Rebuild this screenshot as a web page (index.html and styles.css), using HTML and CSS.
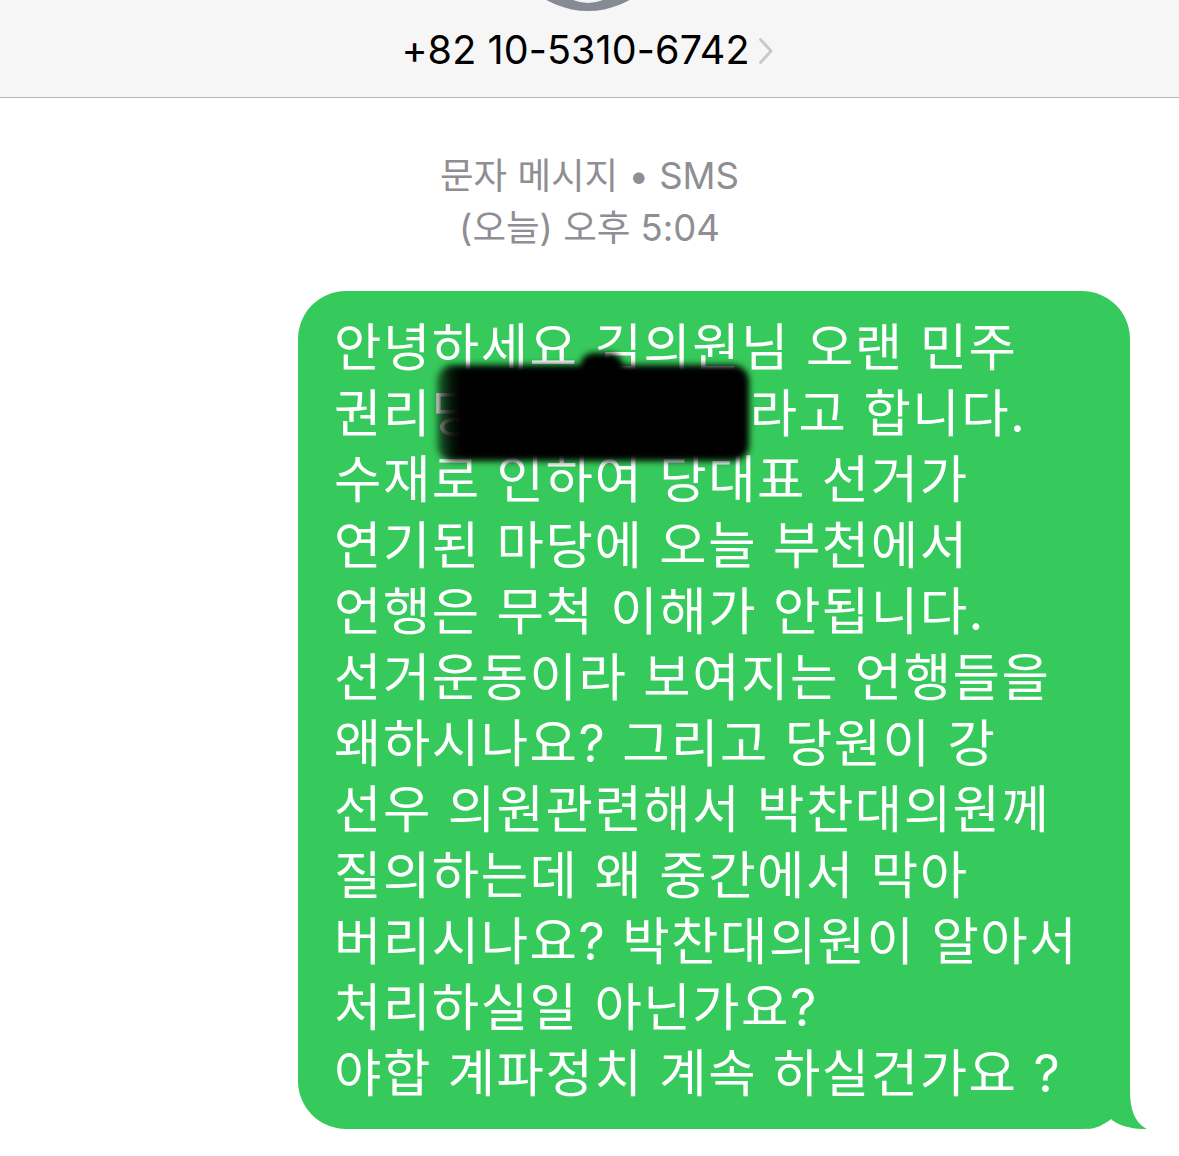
FILE: index.html
```html
<!DOCTYPE html>
<html lang="ko">
<head>
  <meta charset="utf-8">
  <meta name="viewport" content="width=device-width, initial-scale=1">
  <link rel="stylesheet" href="styles.css">
  <title>+82 10-5310-6742</title>
</head>
<body>
  <!-- Contact header -->
  <div class="header">
    <svg class="avatar" width="100" height="14" viewBox="0 0 100 14">
      <circle cx="50" cy="-73" r="84" fill="#868a94" />
      <circle cx="50" cy="-36" r="39" fill="#f4f4f6" />
    </svg>
    <div class="contact">
      <span class="number">+82 10-5310-6742</span>
      <svg class="chevron" width="16" height="28" viewBox="0 0 16 28">
        <path d="M2.5 2.5 L13 14 L2.5 25.5" fill="none" stroke="#c7c7cc" stroke-width="2.8" stroke-linecap="round" stroke-linejoin="round" />
      </svg>
    </div>
  </div>

  <!-- Thread -->
  <div class="thread">
    <div class="stamp">
      <div>문자 메시지 • SMS</div>
      <div>(오늘) 오후 5:04</div>
    </div>

    <div class="row">
      <div class="bubble">
        <div class="text">
          안녕하세요 김의원님 오랜 민주<br>
          권리당<span class="gap"></span>라고 합니다.<br>
          수재로 인하여 당대표 선거가<br>
          연기된 마당에 오늘 부천에서<br>
          언행은 무척 이해가 안됩니다.<br>
          선거운동이라 보여지는 언행들을<br>
          왜하시나요? 그리고 당원이 강<br>
          선우 의원관련해서 박찬대의원께<br>
          질의하는데 왜 중간에서 막아<br>
          버리시나요? 박찬대의원이 알아서<br>
          처리하실일 아닌가요?<br>
          야합 계파정치 계속 하실건가요 ?
        </div>
        <div class="blot"></div>
        <div class="blot-tip"></div>
        <svg class="tail" width="60" height="60" viewBox="0 0 60 60">
          <path d="M0 0 L43 0 L43 22 C43 44 50 55 60 60 C50 60.5 31 58 23 49 C17 56 9 60 0 60 Z" fill="#36c95b" />
        </svg>
      </div>
    </div>
  </div>
</body>
</html>
```

FILE: styles.css
```css
body {
  margin: 0;
  background: #ffffff;
  font-family: Inter, "Noto Sans CJK KR", sans-serif;
}

.header {
  position: relative;
  height: 98px;
  background: #f6f6f6;
  border-bottom: 1px solid #b6b6b8;
  display: flex;
  justify-content: center;
  box-sizing: border-box;
  padding-top: 26px;
}

.avatar {
  position: absolute;
  top: 0;
  left: 538px;
}

.contact {
  display: flex;
  align-items: center;
  gap: 8px;
  height: 48px;
  margin-left: -4px;
}

.number {
  font-size: 39.5px;
  color: #000;
  letter-spacing: 0.1px;
}

.chevron {
  margin-top: 1px;
}

.thread {
  padding-top: 52px;
}

.stamp {
  text-align: center;
  color: #8e8e93;
  font-size: 36.5px;
  line-height: 52px;
}

.row {
  display: flex;
  justify-content: flex-end;
  padding-right: 49px;
  margin-top: 37px;
}

.bubble {
  position: relative;
  width: 832px;
  box-sizing: border-box;
  background: #36c95b;
  border-radius: 48px;
  padding: 23px 20px 23px 36px;
}

.text {
  color: #ffffff;
  font-size: 51.5px;
  line-height: 66px;
  letter-spacing: 1.5px;
  white-space: nowrap;
}

.gap {
  display: inline-block;
  width: 269px;
}

/* marker scribble over the name; its left edge lets the last syllable show through */
.blot {
  position: absolute;
  left: 139px;
  top: 74px;
  width: 312px;
  height: 96px;
  background: linear-gradient(to right, rgba(0, 0, 0, 0.45) 0, rgba(0, 0, 0, 0.9) 14px, #000 24px);
  border-radius: 16px;
  filter: blur(3px);
}

.blot-tip {
  position: absolute;
  left: 283px;
  top: 62px;
  width: 42px;
  height: 22px;
  background: #000;
  border-radius: 12px 14px 0 0;
  filter: blur(3px);
}

.tail {
  position: absolute;
  right: -17px;
  bottom: 0;
}
```
